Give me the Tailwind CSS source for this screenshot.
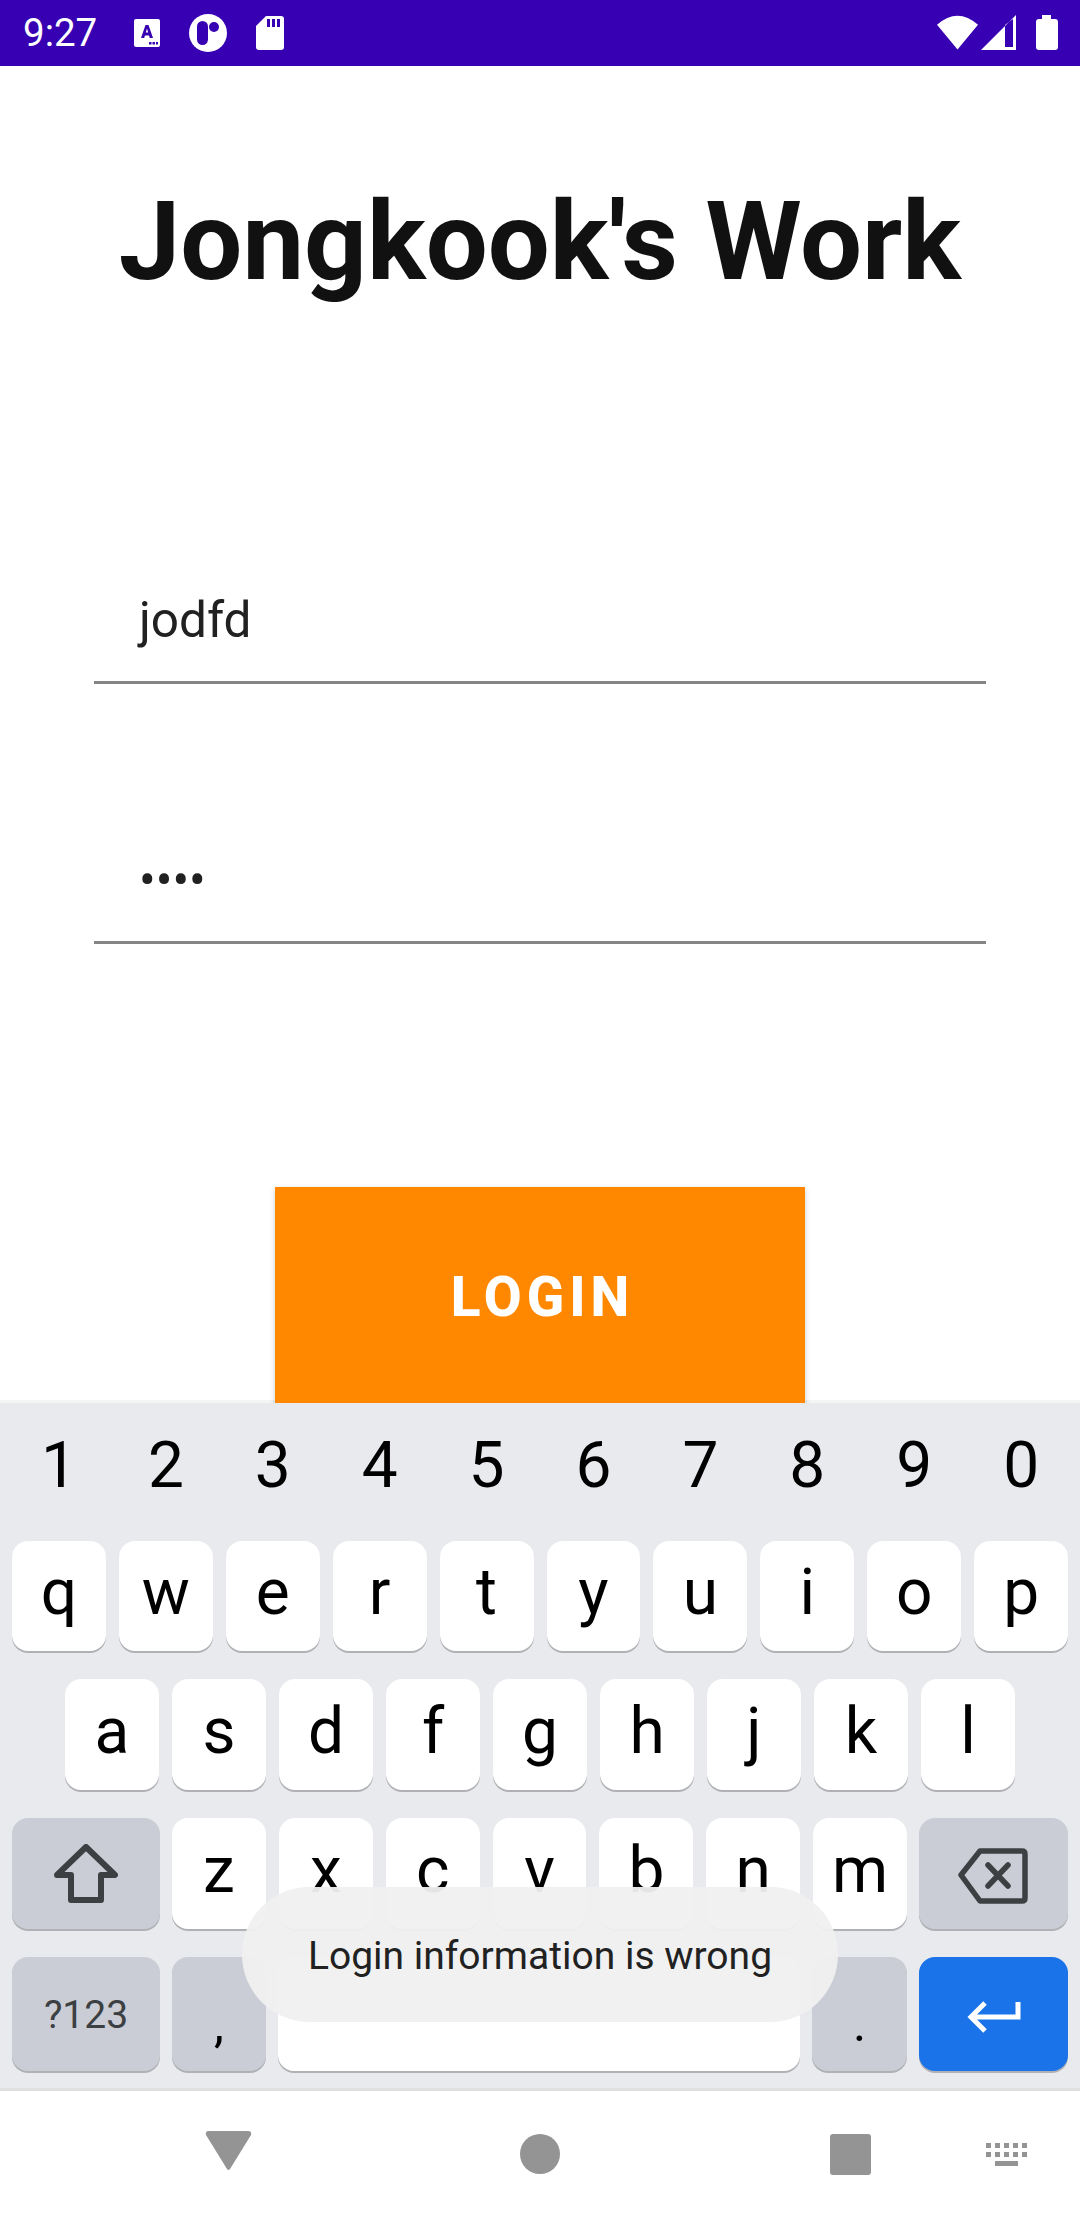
<!DOCTYPE html>
<html lang="en">
<head>
    <meta charset="UTF-8">
    <meta name="viewport" content="width=device-width, initial-scale=1.0">
    <title>Jongkook's Work</title>
    <script src="https://cdn.jsdelivr.net/npm/@tailwindcss/browser@4"></script>
</head>
<body class="font-['Roboto',sans-serif] bg-white">
<div class="relative w-[1080px] h-[2220px] overflow-hidden flex flex-col">

    <!-- status bar -->
    <div class="h-[66px] shrink-0 bg-[#3700b3] flex items-center text-white relative">
        <span class="ml-[23px] text-[38.5px] leading-none">9:27</span>
        <svg class="ml-[37px]" width="26" height="28" viewBox="0 0 26 28"><rect width="26" height="28" rx="2" fill="#fff"/><path d="M7 19 L11.5 6 H14.5 L19 19 H15.8 L15 16.4 H11 L10.2 19Z M11.8 13.6 H14.2 L13 9.6Z" fill="#3700b3" fill-rule="evenodd"/><rect x="15" y="23" width="2.5" height="2.5" fill="#3700b3"/><rect x="18.5" y="23" width="2.5" height="2.5" fill="#3700b3"/><rect x="22" y="23" width="2" height="2.5" fill="#3700b3"/></svg>
        <svg class="ml-[29px]" width="38" height="38" viewBox="0 0 38 38"><circle cx="19" cy="19" r="19" fill="#fff"/><rect x="8" y="7" width="11" height="24" rx="5.5" fill="#3700b3"/><circle cx="25" cy="13" r="5" fill="#3700b3"/></svg>
        <svg class="ml-[29px]" width="28" height="34" viewBox="0 0 28 34"><path d="M10 0 H25 Q28 0 28 3 V31 Q28 34 25 34 H3 Q0 34 0 31 V10Z" fill="#fff"/><rect x="11" y="3" width="3" height="8" fill="#3700b3"/><rect x="16" y="3" width="3" height="8" fill="#3700b3"/><rect x="21" y="3" width="3" height="8" fill="#3700b3"/></svg>
        <div class="ml-auto mr-[22px] flex items-start h-[36px]">
            <svg width="41" height="35" viewBox="0 0 42 35"><path d="M0 9.5 Q21 -9 42 9.5 L21 35Z" fill="#fff"/></svg>
            <svg class="ml-[3px]" width="36" height="35" viewBox="0 0 36 35"><path fill-rule="evenodd" d="M0 35 L35 0 V35Z M24 10 L24 32 H32 V4Z" fill="#fff"/></svg>
            <svg class="ml-[19px]" width="22" height="35" viewBox="0 0 22 35"><path d="M6 0 H15 V4 H19 Q22 4 22 7 V32 Q22 35 19 35 H3 Q0 35 0 32 V7 Q0 4 3 4 H6Z" fill="#fff"/></svg>
        </div>
    </div>

    <!-- app content -->
    <div class="relative flex-1 min-h-0 overflow-hidden flex flex-col">
        <h1 class="shrink-0 mt-[110px] text-center text-[110px] leading-[132px] font-bold text-[#111111]">Jongkook's Work</h1>

        <div class="shrink-0 mt-[282px] mx-[94px] h-[94px] border-b-[3px] border-[#858585] pl-[45px] text-[49.5px] leading-[60px] text-[#212121]">jodfd</div>
        <div class="shrink-0 mt-[166px] mx-[94px] h-[94px] border-b-[3px] border-[#858585] pl-[45px] text-[49.5px] leading-[60px] text-[#212121]">••••</div>

        <button class="relative z-10 shrink-0 mt-[243px] mx-auto w-[530px] h-[220px] bg-[#ff8800] text-white font-extrabold text-[55px] tracking-[5px] pl-[5px] shadow-[0_2px_6px_rgba(0,0,0,0.2)]">LOGIN</button>
        <div class="absolute inset-x-0 bottom-0 h-[3px] bg-[#f4f4f4]"></div>
    </div>

    <!-- keyboard -->
    <div class="shrink-0 bg-[#e8eaed] h-[685px] flex flex-col">
        <div id="digits" class="h-[138px] flex gap-[13px] px-[12px] pb-[12px]"></div>
        <div id="row1" class="h-[110px] flex gap-[13px] px-[12px]"></div>
        <div id="row2" class="mt-[28px] h-[111px] flex gap-[13px] px-[65px]"></div>
        <div class="mt-[28px] h-[111px] flex gap-[12px] px-[12px]">
            <div class="w-[148px] rounded-[16px] bg-[#cacdd5] shadow-[0_2px_0_#b0b1b5] flex items-center justify-center">
                <svg width="64" height="60" viewBox="0 0 64 60"><path d="M32 3 L61 31 H47 V56 H17 V31 H3Z" fill="none" stroke="#3c4043" stroke-width="6" stroke-linejoin="round"/></svg>
            </div>
            <div id="row3" class="flex-1 flex gap-[13px]"></div>
            <div class="w-[149px] rounded-[16px] bg-[#cacdd5] shadow-[0_2px_0_#b0b1b5] flex items-center justify-center pt-[5px]">
                <svg width="72" height="56" viewBox="0 0 72 56"><path d="M22 3 H64 Q67 3 67 6 V50 Q67 53 64 53 H22 L3 27Z" fill="none" stroke="#3c4043" stroke-width="5.5" stroke-linejoin="round"/><path d="M30 17 L50 38 M50 17 L30 38" stroke="#3c4043" stroke-width="5.5" stroke-linecap="round"/></svg>
            </div>
        </div>
        <div class="mt-[28px] h-[114px] flex gap-[12px] px-[12px]">
            <div class="w-[148px] rounded-[16px] bg-[#cacdd5] shadow-[0_2px_0_#b0b1b5] flex items-center justify-center pt-[3px] text-[39px] text-[#3c4043]">?123</div>
            <div class="w-[94px] rounded-[16px] bg-[#cacdd5] shadow-[0_2px_0_#b0b1b5] flex items-center justify-center text-[50px] text-black pt-[20px]">,</div>
            <div class="flex-1 rounded-[16px] bg-white shadow-[0_2px_0_#b0b1b5]"></div>
            <div class="w-[95px] rounded-[16px] bg-[#cacdd5] shadow-[0_2px_0_#b0b1b5] flex items-center justify-center text-[50px] text-black pt-[20px]">.</div>
            <div class="w-[149px] rounded-[16px] bg-[#1a73e8] shadow-[0_2px_0_#b0b1b5] flex items-center justify-center pt-[6px]">
                <svg width="54" height="34" viewBox="0 0 54 34"><path d="M51 2 V17 H5 M18 3 L4 17 L18 31" fill="none" stroke="#fff" stroke-width="5"/></svg>
            </div>
        </div>
    </div>

    <!-- nav bar -->
    <div class="shrink-0 h-[132px] border-t-[3px] border-[#e0e0e0] bg-white relative">
        <svg class="absolute left-[205px] top-[40px]" width="47" height="40" viewBox="0 0 47 40"><path d="M4 0 H43 Q47 0 46 4 L25 38 Q23.5 40 22 38 L1 4 Q0 0 4 0Z" fill="#949494"/></svg>
        <div class="absolute left-[520px] top-[43px] w-[40px] h-[40px] rounded-full bg-[#949494]"></div>
        <div class="absolute left-[830px] top-[43px] w-[41px] h-[41px] rounded-[3px] bg-[#949494]"></div>
        <svg class="absolute left-[986px] top-[52px]" width="41" height="23" viewBox="0 0 41 23" fill="#949494"><path d="M0 0h5v5H0zM9 0h5v5H9zM18 0h5v5h-5zM27 0h5v5h-5zM36 0h5v5h-5zM0 9h5v5H0zM9 9h5v5H9zM18 9h5v5h-5zM27 9h5v5h-5zM36 9h5v5h-5zM9 18h23v5H9z"/></svg>
    </div>

    <!-- toast -->
    <div class="absolute left-[242px] top-[1887px] w-[596px] h-[135px] rounded-full bg-[#f0f0f0]/95 flex items-center justify-center pt-[3px] text-[39px] text-[#212121]">Login information is wrong</div>
</div>

<script>
    const digitClass = "flex-1 flex items-center justify-center text-[64px] text-black";
    const letterClass = "flex-1 rounded-[16px] bg-white shadow-[0_2px_0_#b0b1b5] flex items-center justify-center pb-[6px] text-[64px] text-black";

    function fillRow(id, keys, className) {
        const row = document.getElementById(id);
        keys.split('').forEach(key => {
            const el = document.createElement('div');
            el.className = className;
            el.textContent = key;
            row.appendChild(el);
        });
    }

    fillRow('digits', '1234567890', digitClass);
    fillRow('row1', 'qwertyuiop', letterClass);
    fillRow('row2', 'asdfghjkl', letterClass);
    fillRow('row3', 'zxcvbnm', letterClass);
</script>
</body>
</html>
